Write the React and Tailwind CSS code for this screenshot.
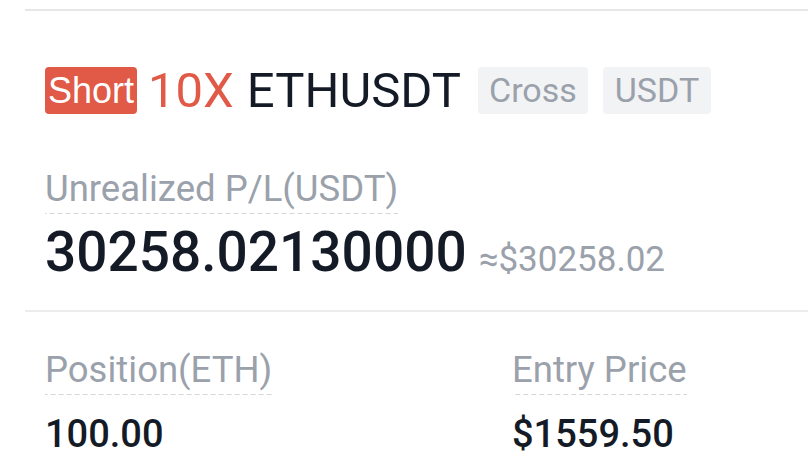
import React from 'react';

const DashedLabel = ({ children }) => (
  <span className="inline-block pb-[5px] text-[36.5px] leading-[40px] text-[#9aa1ab] bg-[linear-gradient(to_right,#d3d7dc_5px,transparent_5px)] bg-[length:8px_1px] bg-repeat-x bg-bottom">
    {children}
  </span>
);

const Tag = ({ children }) => (
  <span className="flex items-center h-[47px] px-[11px] rounded-[4px] bg-[#f2f3f5] text-[34px] text-[#9aa1ab]">
    {children}
  </span>
);

const App = () => {
  return (
    <div className="w-[808px] h-[475px] overflow-hidden bg-white font-['Roboto',sans-serif]">
      <div className="mt-[9px] ml-[25px] border-t-2 border-[#e6e6e6]">
        <div className="pl-[20px]">
          {/* title row */}
          <div className="flex items-center mt-[56px] h-[47px]">
            <span className="flex items-center h-[47px] px-[3px] rounded-[4px] bg-[#e05a47] text-white text-[36px] font-['Liberation_Sans',sans-serif]">
              Short
            </span>
            <span className="ml-[11px] text-[49px] text-[#e05a47]">10X</span>
            <span className="ml-[13px] text-[49px] text-[#141b27]">ETHUSDT</span>
            <div className="flex gap-[15px] ml-[17px]">
              <Tag>Cross</Tag>
              <span className="flex items-center h-[47px] px-[12px] rounded-[4px] bg-[#f2f3f5] text-[34px] text-[#9aa1ab]">
                USDT
              </span>
            </div>
          </div>

          {/* unrealized */}
          <div className="mt-[55px]">
            <DashedLabel>Unrealized P/L(USDT)</DashedLabel>
          </div>
          <div className="flex items-baseline mt-[8px] h-[60px]">
            <span className="text-[55px] leading-[60px] font-medium text-[#141b27]">30258.02130000</span>
            <span className="ml-[12px] text-[35px] text-[#9aa1ab]">≈$30258.02</span>
          </div>
        </div>

        <div className="mt-[28px] border-t-2 border-[#ececec]" />

        {/* position row */}
        <div className="grid grid-cols-[467px_1fr] pl-[20px] mt-[38px]">
          <div>
            <DashedLabel>Position(ETH)</DashedLabel>
            <div className="mt-[19px] text-[38px] leading-[40px] font-medium text-[#141b27]">100.00</div>
          </div>
          <div>
            <DashedLabel>Entry Price</DashedLabel>
            <div className="mt-[19px] text-[38px] leading-[40px] font-medium text-[#141b27]">$1559.50</div>
          </div>
        </div>
      </div>
    </div>
  );
};

export default App;
